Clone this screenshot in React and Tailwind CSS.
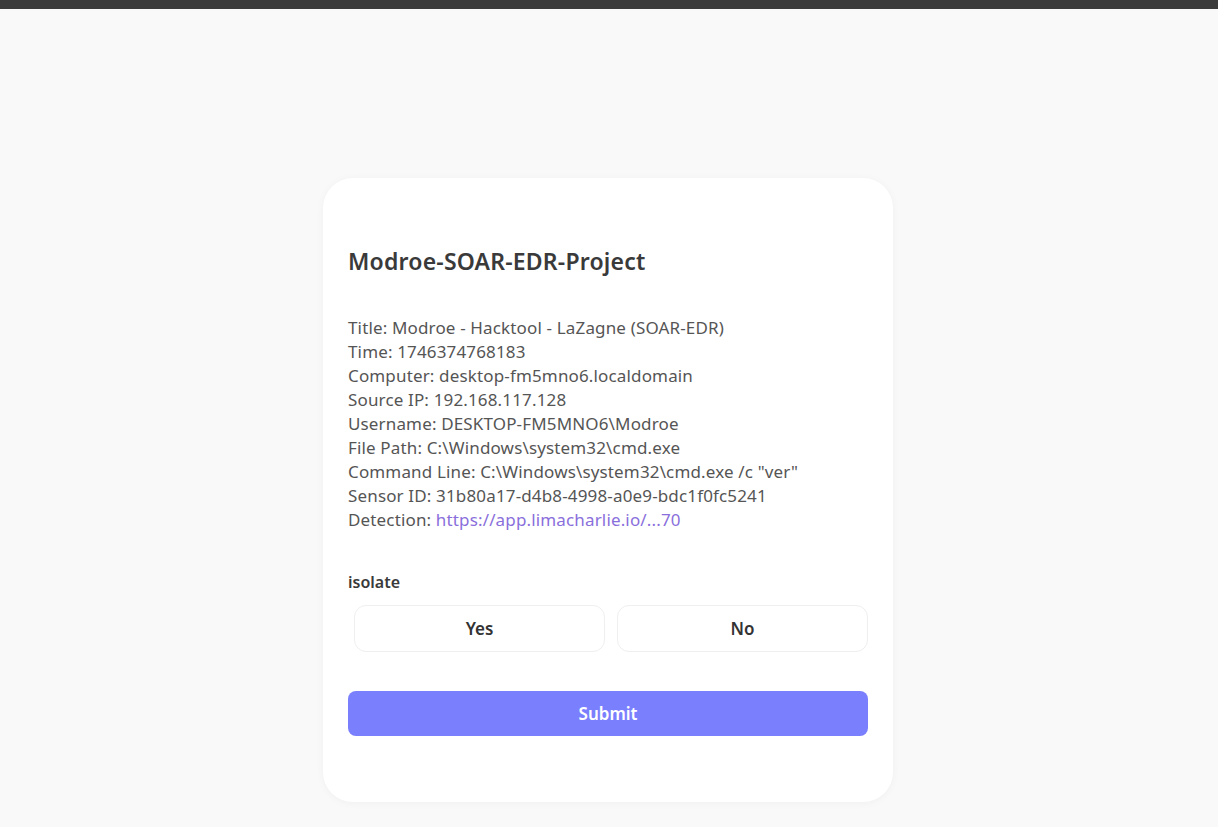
export default function App() {
  const lines = [
    "Title: Modroe - Hacktool - LaZagne (SOAR-EDR)",
    "Time: 1746374768183",
    "Computer: desktop-fm5mno6.localdomain",
    "Source IP: 192.168.117.128",
    "Username: DESKTOP-FM5MNO6\\Modroe",
    "File Path: C:\\Windows\\system32\\cmd.exe",
    'Command Line: C:\\Windows\\system32\\cmd.exe /c "ver"',
    "Sensor ID: 31b80a17-d4b8-4998-a0e9-bdc1f0fc5241",
  ];
  return (
    <div className="min-h-[827px] bg-[#f9f9f9] flex flex-col" style={{ fontFamily: '"Noto Sans", "Open Sans", sans-serif' }}>
      <div className="h-[9px] bg-[#3b3b3b]" />
      <div className="flex justify-center pt-[169px] pb-[25px] pr-[2px]">
        <div className="w-[570px] bg-white rounded-[30px] shadow-[0_1px_8px_rgba(0,0,0,0.04)] px-[25px] pt-[69px] pb-[66px]">
          <h1 className="text-[23px] leading-[28px] font-semibold tracking-[0.2px] text-[#3a3a3a]">Modroe-SOAR-EDR-Project</h1>
          <div className="mt-[41px] text-[17px] leading-[24px] tracking-[0.15px] text-[#555]">
            {lines.map((l, i) => (
              <div key={i}>{l}</div>
            ))}
            <div>
              Detection: <a className="text-[#8a6fdc]">https://app.limacharlie.io/...70</a>
            </div>
          </div>
          <div className="mt-[38px] text-[16px] leading-[24px] font-semibold text-[#3a3a3a]">isolate</div>
          <div className="mt-[11px] pl-[6px] flex gap-[12px]">
            <button className="w-[251px] h-[47px] rounded-[12px] border border-[#efefef] bg-white text-[17px] font-semibold text-[#333]">Yes</button>
            <button className="w-[251px] h-[47px] rounded-[12px] border border-[#efefef] bg-white text-[17px] font-semibold text-[#333]">No</button>
          </div>
          <button className="mt-[39px] w-full h-[45px] rounded-[8px] bg-[#7a7ffe] text-white text-[17px] font-semibold">Submit</button>
        </div>
      </div>
    </div>
  );
}
